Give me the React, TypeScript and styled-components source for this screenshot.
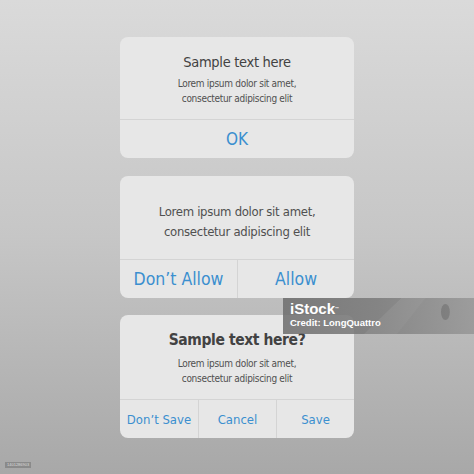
import * as React from "react"
import styled, { createGlobalStyle } from "styled-components"

const GlobalStyle = createGlobalStyle`
    html, body {
        margin: 0;
        padding: 0;
    }
    body {
        font-family: "DejaVu Sans Condensed", "DejaVu Sans", sans-serif;
        font-stretch: condensed;
    }
`;

type Dialog = {
    title?: string
    bold?: boolean
    body: string[]
    big?: boolean
    top: number
    height: number
    buttons: string[]
    buttonSize: number
}

const dialogs: Dialog[] = [
    {
        title: "Sample text here",
        body: ["Lorem ipsum dolor sit amet,", "consectetur adipiscing elit"],
        top: 15,
        height: 121,
        buttons: ["OK"],
        buttonSize: 17,
    },
    {
        body: ["Lorem ipsum dolor sit amet,", "consectetur adipiscing elit"],
        big: true,
        top: 26,
        height: 122,
        buttons: ["Don\u2019t Allow", "Allow"],
        buttonSize: 17.5,
    },
    {
        title: "Sample text here?",
        bold: true,
        body: ["Lorem ipsum dolor sit amet,", "consectetur adipiscing elit"],
        top: 14,
        height: 123,
        buttons: ["Don\u2019t Save", "Cancel", "Save"],
        buttonSize: 13,
    },
]

const App = () => {
    return (
        <Page>
            <GlobalStyle />
            {dialogs.map((d, i) => (
                <Alert key={i} $height={d.height}>
                    <Message $top={d.top}>
                        {d.title && <Title $bold={d.bold}>{d.title}</Title>}
                        <Body $big={d.big}>
                            {d.body[0]}
                            <br />
                            {d.body[1]}
                        </Body>
                    </Message>
                    <Buttons $count={d.buttons.length}>
                        {d.buttons.map((b) => (
                            <Button key={b} $size={d.buttonSize}>{b}</Button>
                        ))}
                    </Buttons>
                </Alert>
            ))}
            <Watermark>
                <Brand>iStock<sup>™</sup></Brand>
                <Credit>Credit: LongQuattro</Credit>
                <Shapes viewBox="0 0 100 36" preserveAspectRatio="none">
                    <polygon points="0,36 34,0 56,0 30,36" fill="rgba(255,255,255,0.07)" />
                    <polygon points="30,36 56,0 100,0 100,36" fill="rgba(255,255,255,0.04)" />
                    <ellipse cx="74" cy="14" rx="4" ry="8" fill="rgba(60,60,60,0.25)" />
                </Shapes>
            </Watermark>
            <StockId>1401286903</StockId>
        </Page>
    )
}
export default App

const Page = styled.div`
    position: relative;
    width: 474px;
    height: 474px;
    box-sizing: border-box;
    padding-top: 37px;
    display: flex;
    flex-direction: column;
    align-items: center;
    gap: 17.5px;
    background: linear-gradient(180deg, #dadada 0%, #c6c6c6 50%, #a8a8a8 100%);
    overflow: hidden;
`;

const Alert = styled.div<{ $height: number }>`
    width: 234px;
    height: ${(p) => p.$height}px;
    flex-shrink: 0;
    display: flex;
    flex-direction: column;
    background: #e7e7e7;
    border-radius: 8px;
    overflow: hidden;
`;

const Message = styled.div<{ $top: number }>`
    flex: 1;
    display: flex;
    flex-direction: column;
    align-items: center;
    padding-top: ${(p) => p.$top}px;
    border-bottom: 1px solid #d4d4d4;
    text-align: center;
`;

const Title = styled.div<{ $bold?: boolean }>`
    font-size: ${(p) => (p.$bold ? "15.5px" : "14.5px")};
    font-weight: ${(p) => (p.$bold ? 700 : 400)};
    letter-spacing: ${(p) => (p.$bold ? "-0.4px" : "-0.3px")};
    line-height: ${(p) => (p.$bold ? "22px" : "20px")};
    margin-bottom: ${(p) => (p.$bold ? "4.5px" : "3.5px")};
    color: #424242;
`;

const Body = styled.div<{ $big?: boolean }>`
    font-size: ${(p) => (p.$big ? "13px" : "10px")};
    letter-spacing: ${(p) => (p.$big ? "-0.3px" : "-0.3px")};
    line-height: ${(p) => (p.$big ? "20px" : "15px")};
    color: #505050;
`;

const Buttons = styled.div<{ $count: number }>`
    height: 38px;
    display: grid;
    grid-template-columns: repeat(${(p) => p.$count}, 1fr);
`;

const Button = styled.div<{ $size: number }>`
    display: flex;
    align-items: center;
    justify-content: center;
    font-size: ${(p) => p.$size}px;
    color: #3b8fcf;
    & + & {
        border-left: 1px solid #d4d4d4;
    }
`;

const Watermark = styled.div`
    position: absolute;
    left: 283px;
    top: 298px;
    width: 191px;
    height: 36px;
    box-sizing: border-box;
    padding: 2px 0 0 7px;
    background: linear-gradient(90deg, rgba(112, 112, 112, 0.88) 0%, rgba(122, 122, 122, 0.85) 50%, rgba(140, 140, 140, 0.75) 100%);
    color: #fff;
    font-family: "Liberation Sans", sans-serif;
    font-stretch: normal;
    overflow: hidden;
`;

const Shapes = styled.svg`
    position: absolute;
    right: 0;
    top: 0;
    width: 110px;
    height: 36px;
`;

const Brand = styled.div`
    position: relative;
    z-index: 1;
    font-size: 15px;
    font-weight: 700;
    line-height: 17px;
    sup {
        font-size: 4px;
        vertical-align: top;
    }
`;

const Credit = styled.div`
    position: relative;
    z-index: 1;
    font-size: 9.5px;
    font-weight: 700;
    line-height: 12px;
`;

const StockId = styled.div`
    position: absolute;
    left: 5px;
    top: 462px;
    padding: 0 2px;
    background: #8a8a8a;
    color: #ddd;
    font-family: "Liberation Sans", sans-serif;
    font-size: 4px;
    line-height: 6px;
`;
